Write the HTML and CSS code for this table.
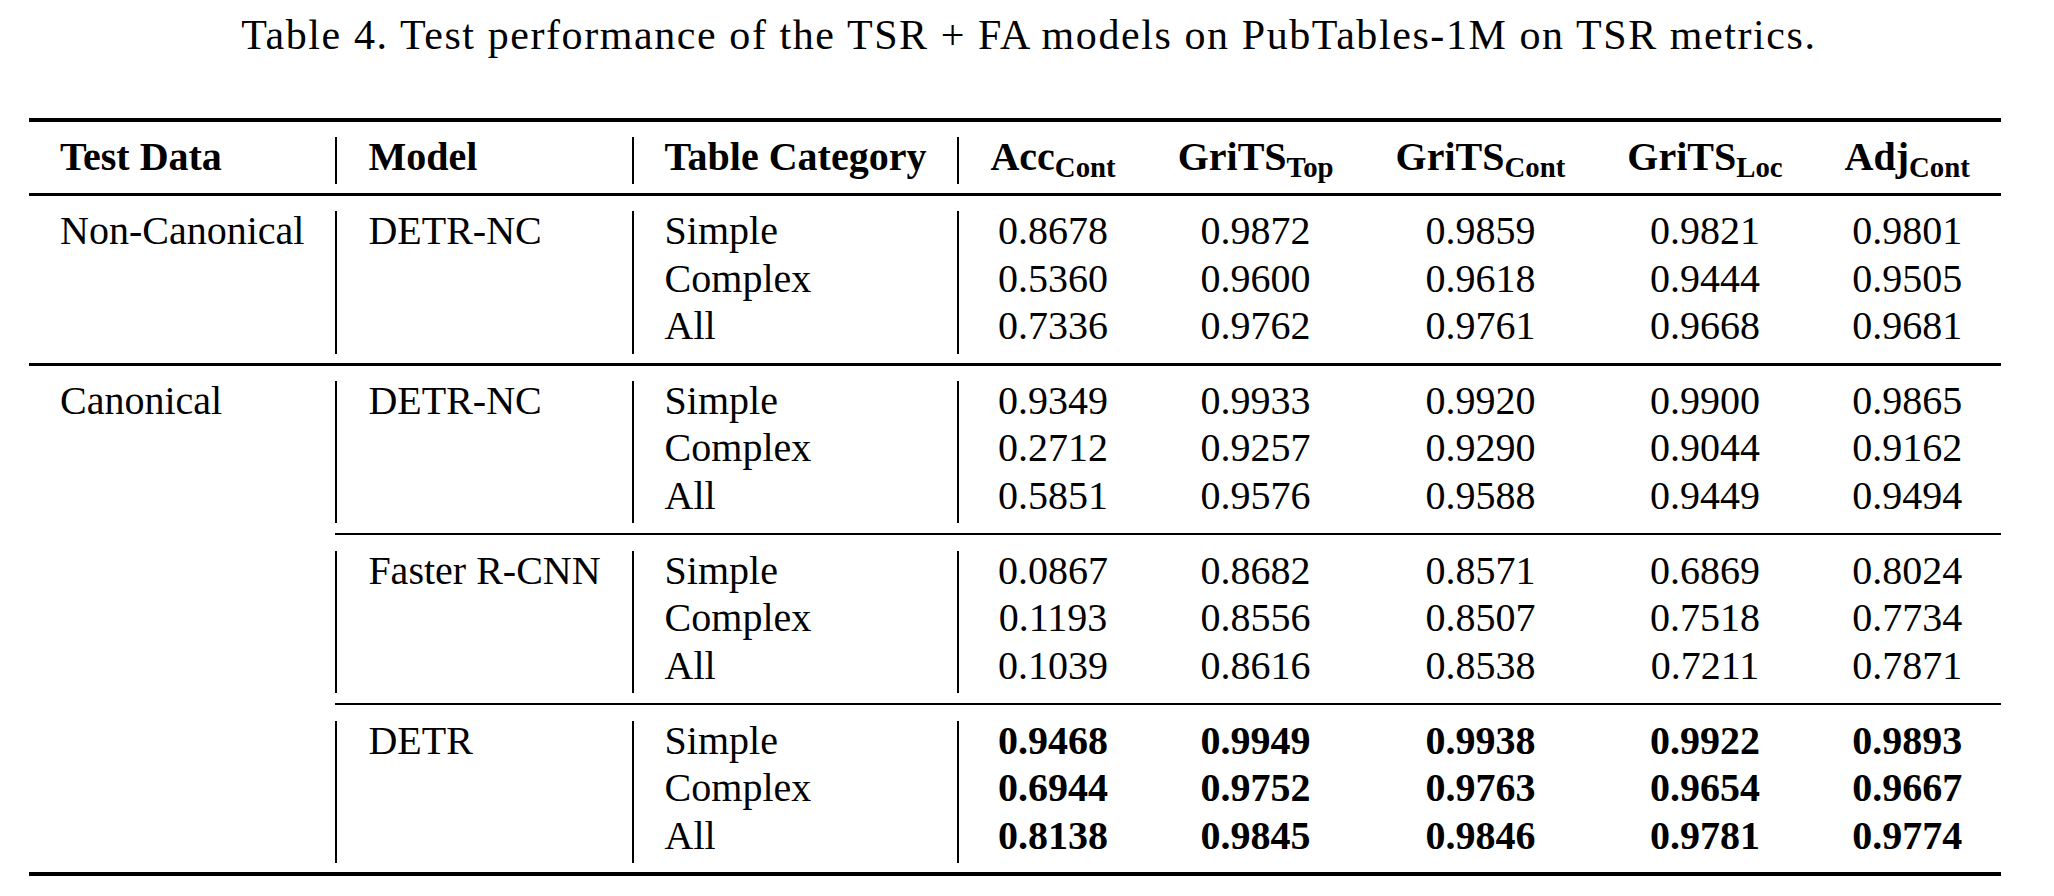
FILE: index.html
```html
<!DOCTYPE html>
<html lang="en">
<head>
<meta charset="utf-8">
<title>Table 4</title>
<link rel="stylesheet" href="styles.css">
</head>
<body>
<div class="page">
<table class="res">
<caption>Table 4. Test performance of the TSR + FA models on PubTables-1M on TSR metrics.</caption>
<thead>
<tr class="rule top"><td colspan="8"><div class="line heavy"></div></td></tr>
<tr class="hdr">
<th class="t">Test Data</th>
<th class="t v">Model</th>
<th class="t v">Table Category</th>
<th class="n v">Acc<span class="sub">Cont</span></th>
<th class="n">GriTS<span class="sub">Top</span></th>
<th class="n">GriTS<span class="sub">Cont</span></th>
<th class="n">GriTS<span class="sub">Loc</span></th>
<th class="n">Adj<span class="sub">Cont</span></th>
</tr>
<tr class="rule mid"><td colspan="8"><div class="line"></div></td></tr>
</thead>
<tbody>
<tr><td class="t">Non-Canonical</td><td class="t v">DETR-NC</td><td class="t v">Simple</td><td class="n v">0.8678</td><td class="n">0.9872</td><td class="n">0.9859</td><td class="n">0.9821</td><td class="n">0.9801</td></tr>
<tr><td class="t"></td><td class="t v"></td><td class="t v">Complex</td><td class="n v">0.5360</td><td class="n">0.9600</td><td class="n">0.9618</td><td class="n">0.9444</td><td class="n">0.9505</td></tr>
<tr><td class="t"></td><td class="t v"></td><td class="t v">All</td><td class="n v">0.7336</td><td class="n">0.9762</td><td class="n">0.9761</td><td class="n">0.9668</td><td class="n">0.9681</td></tr>
<tr class="rule mid"><td colspan="8"><div class="line"></div></td></tr>

<tr><td class="t">Canonical</td><td class="t v">DETR-NC</td><td class="t v">Simple</td><td class="n v">0.9349</td><td class="n">0.9933</td><td class="n">0.9920</td><td class="n">0.9900</td><td class="n">0.9865</td></tr>
<tr><td class="t"></td><td class="t v"></td><td class="t v">Complex</td><td class="n v">0.2712</td><td class="n">0.9257</td><td class="n">0.9290</td><td class="n">0.9044</td><td class="n">0.9162</td></tr>
<tr><td class="t"></td><td class="t v"></td><td class="t v">All</td><td class="n v">0.5851</td><td class="n">0.9576</td><td class="n">0.9588</td><td class="n">0.9449</td><td class="n">0.9494</td></tr>
<tr class="rule cmid"><td></td><td colspan="7"><div class="line thin"></div></td></tr>

<tr><td class="t"></td><td class="t v">Faster R-CNN</td><td class="t v">Simple</td><td class="n v">0.0867</td><td class="n">0.8682</td><td class="n">0.8571</td><td class="n">0.6869</td><td class="n">0.8024</td></tr>
<tr><td class="t"></td><td class="t v"></td><td class="t v">Complex</td><td class="n v">0.1193</td><td class="n">0.8556</td><td class="n">0.8507</td><td class="n">0.7518</td><td class="n">0.7734</td></tr>
<tr><td class="t"></td><td class="t v"></td><td class="t v">All</td><td class="n v">0.1039</td><td class="n">0.8616</td><td class="n">0.8538</td><td class="n">0.7211</td><td class="n">0.7871</td></tr>
<tr class="rule cmid"><td></td><td colspan="7"><div class="line thin"></div></td></tr>

<tr><td class="t"></td><td class="t v">DETR</td><td class="t v">Simple</td><td class="n v b">0.9468</td><td class="n b">0.9949</td><td class="n b">0.9938</td><td class="n b">0.9922</td><td class="n b">0.9893</td></tr>
<tr><td class="t"></td><td class="t v"></td><td class="t v">Complex</td><td class="n v b">0.6944</td><td class="n b">0.9752</td><td class="n b">0.9763</td><td class="n b">0.9654</td><td class="n b">0.9667</td></tr>
<tr><td class="t"></td><td class="t v"></td><td class="t v">All</td><td class="n v b">0.8138</td><td class="n b">0.9845</td><td class="n b">0.9846</td><td class="n b">0.9781</td><td class="n b">0.9774</td></tr>
<tr class="rule bottom"><td colspan="8"><div class="line heavy"></div></td></tr>
</tbody>
</table>
</div>
</body>
</html>
```

FILE: styles.css
```css
html, body {
  margin: 0;
  padding: 0;
  background: #ffffff;
}

body {
  font-family: "Liberation Serif", "Times New Roman", serif;
  color: #000000;
}

.page {
  padding: 12px 0 0 29px;
}

.res {
  border-collapse: separate;
  border-spacing: 0;
  font-size: 40px;
}

.res caption {
  caption-side: top;
  font-weight: normal;
  font-size: 42px;
  letter-spacing: 1.58px;
  line-height: 46px;
  height: 46px;
  padding: 0 0 60px 28px;
  white-space: nowrap;
  text-align: center;
}

.res td,
.res th {
  padding: 0 31px 7.5px;
  line-height: 40px;
  vertical-align: top;
  white-space: nowrap;
}

.res th {
  font-weight: bold;
  padding-bottom: 7px;
}

.res .t {
  text-align: left;
}

.res .n {
  text-align: center;
}

.res .b {
  font-weight: bold;
}

.res .v {
  border-left: 2px solid #000000;
}

.sub {
  font-size: 0.72em;
  line-height: 0;
  vertical-align: -7px;
}

.res .rule td {
  padding: 9px 0 15px;
  line-height: 0;
}

.res .rule.top td {
  padding: 0 0 15px;
}

.res .rule.bottom td {
  padding: 9px 0 0;
}

.res .rule.cmid td {
  padding: 10px 0 15.5px;
}

.line {
  height: 3px;
  background: #000000;
}

.line.heavy {
  height: 4px;
}

.line.thin {
  height: 2px;
}
```
